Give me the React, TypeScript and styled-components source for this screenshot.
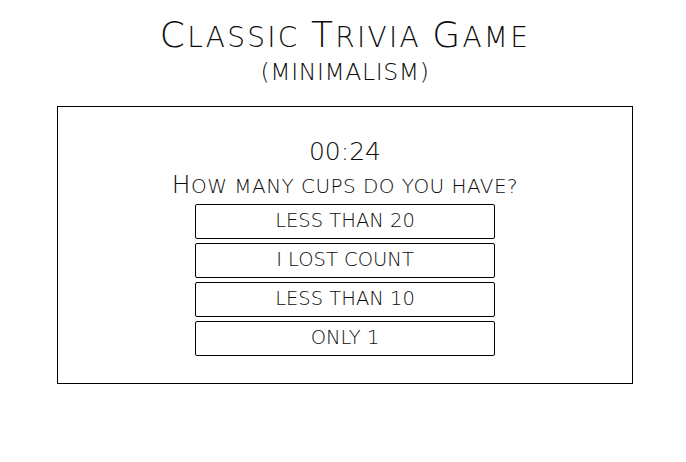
import React from "react";
import styled, { createGlobalStyle } from "styled-components";

const Global = createGlobalStyle`
  html, body { margin: 0; padding: 0; background: #fff; }
  body { font-family: "DejaVu Sans", "Lato", sans-serif; font-weight: 200; color: #0c0c0c; }
`;

const Page = styled.div`
  width: 686px;
  box-sizing: border-box;
  padding: 13px 0 0 4px;
  display: flex;
  flex-direction: column;
  align-items: center;
`;

const Title = styled.h1`
  margin: 0;
  font-weight: 200;
  font-size: 28px;
  line-height: 44px;
  height: 44px;
  text-transform: uppercase;
  letter-spacing: 2.3px;
`;

const Cap = styled.span<{ $size: number }>`
  font-size: ${(p) => p.$size}px;
`;

const Subtitle = styled.h2`
  margin: 0;
  font-weight: 200;
  font-size: 23.5px;
  line-height: 30px;
  text-transform: uppercase;
  letter-spacing: 0.6px;
`;

const Card = styled.div`
  margin-top: 19px;
  width: 576px;
  height: 278px;
  box-sizing: border-box;
  border: 1px solid #000;
  display: flex;
  flex-direction: column;
  align-items: center;
  padding-top: 30px;
`;

const Timer = styled.div`
  font-size: 25px;
  line-height: 30px;
`;

const Question = styled.div`
  margin-top: 4px;
  font-size: 20px;
  line-height: 28px;
  text-transform: uppercase;
  letter-spacing: 0.45px;
`;

const Answers = styled.div`
  margin-top: 4px;
  display: flex;
  flex-direction: column;
  gap: 4px;
`;

const Answer = styled.button`
  width: 300px;
  height: 35px;
  box-sizing: border-box;
  border: 1px solid #000;
  border-radius: 2px;
  background: #fff;
  font-family: inherit;
  color: #0c0c0c;
  font-weight: 200;
  font-size: 19.5px;
  text-transform: uppercase;
  padding: 0 0 2px;
  cursor: pointer;
`;

function SmallCaps({ text, size }: { text: string; size: number }) {
  const parts: React.ReactNode[] = [];
  let buf = "";
  let k = 0;
  for (const ch of text) {
    if (ch !== ch.toLowerCase()) {
      if (buf) parts.push(buf);
      buf = "";
      parts.push(
        <Cap key={k++} $size={size}>
          {ch}
        </Cap>
      );
    } else {
      buf += ch;
    }
  }
  if (buf) parts.push(buf);
  return <>{parts}</>;
}

const answers = ["less than 20", "I lost count", "less than 10", "only 1"];

export default function App() {
  return (
    <>
      <Global />
      <Page>
        <Title>
          <SmallCaps text="Classic Trivia Game" size={36} />
        </Title>
        <Subtitle>(Minimalism)</Subtitle>
        <Card>
          <Timer>00:24</Timer>
          <Question>
            <SmallCaps text="How many cups do you have?" size={25} />
          </Question>
          <Answers>
            {answers.map((a) => (
              <Answer key={a}>{a}</Answer>
            ))}
          </Answers>
        </Card>
      </Page>
    </>
  );
}
